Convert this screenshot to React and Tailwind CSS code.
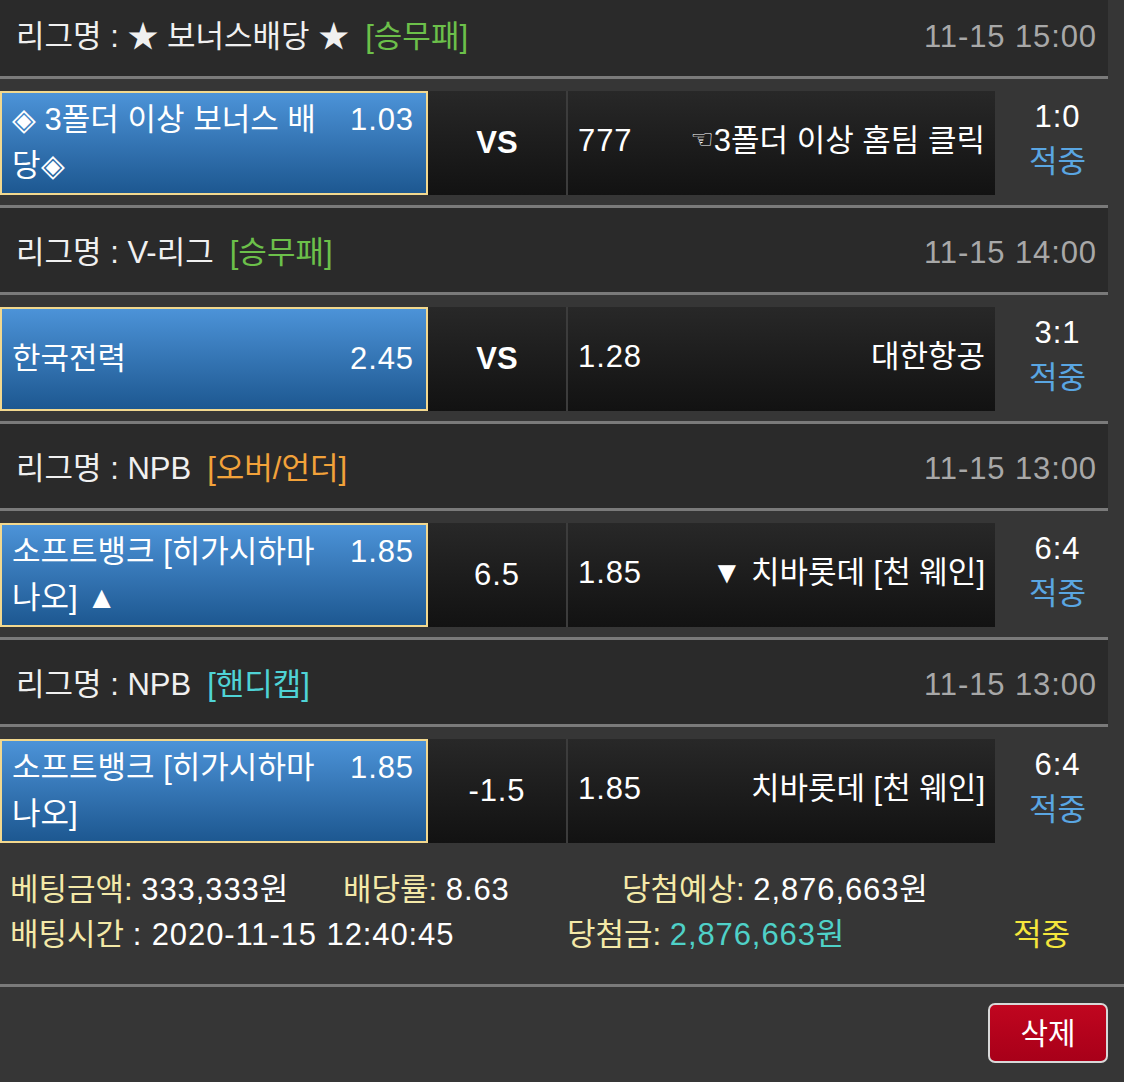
const games = [
  {
    league: "★ 보너스배당 ★",
    type: "[승무패]",
    typeColor: "text-[#6cc04a]",
    time: "11-15 15:00",
    home: "◈ 3폴더 이상 보너스 배당◈",
    homeOdds: "1.03",
    mid: "VS",
    bold: true,
    awayOdds: "777",
    away: "3폴더 이상 홈팀 클릭",
    hand: true,
    score: "1:0",
  },
  {
    league: "V-리그",
    type: "[승무패]",
    typeColor: "text-[#6cc04a]",
    time: "11-15 14:00",
    home: "한국전력",
    homeOdds: "2.45",
    mid: "VS",
    bold: true,
    awayOdds: "1.28",
    away: "대한항공",
    score: "3:1",
  },
  {
    league: "NPB",
    type: "[오버/언더]",
    typeColor: "text-[#f2a23a]",
    time: "11-15 13:00",
    home: "소프트뱅크 [히가시하마 나오] ▲",
    homeOdds: "1.85",
    mid: "6.5",
    awayOdds: "1.85",
    away: "▼ 치바롯데 [천 웨인]",
    score: "6:4",
  },
  {
    league: "NPB",
    type: "[핸디캡]",
    typeColor: "text-[#4fd3d6]",
    time: "11-15 13:00",
    home: "소프트뱅크 [히가시하마 나오]",
    homeOdds: "1.85",
    mid: "-1.5",
    awayOdds: "1.85",
    away: "치바롯데 [천 웨인]",
    score: "6:4",
  },
];

// digits in the shot run a bit wider than Liberation Sans
const N = ({ children, className = "" }) => (
  <span className={`tracking-[0.9px] ${className}`}>{children}</span>
);

function Game({ g }) {
  return (
    <div>
      <div className="h-[84px] bg-[#2a2a2a] flex items-center justify-between pl-[16px] pr-[11px] pt-[6px]">
        <div className="flex items-center">
          <span className="text-[#f0f0f0]">리그명 : {g.league}</span>
          <span className={`ml-[16px] ${g.typeColor}`}>{g.type}</span>
        </div>
        <N className="text-[#a8a8a8]">{g.time}</N>
      </div>
      <div className="h-[3px] bg-[#7a7a7a]"></div>
      <div className="h-[126px] pt-[12px] flex">
        <div className="w-[428px] h-[104px] border-2 border-[#f2d88e] bg-gradient-to-b from-[#4c93d8] to-[#1d5891] flex items-center pl-[10px] pr-[12px]">
          <div className="flex items-start justify-between w-full">
            <div className="w-[318px] text-white leading-[46px]">{g.home}</div>
            <N className="text-white leading-[46px]">{g.homeOdds}</N>
          </div>
        </div>
        <div className="w-[138px] h-[104px] bg-gradient-to-b from-[#282828] to-[#121212] flex items-center justify-center text-white">
          <span className={g.bold ? "font-bold" : "tracking-[0.9px]"}>{g.mid}</span>
        </div>
        <div className="w-[2px] h-[104px] bg-[#3c3c3c]"></div>
        <div className="w-[427px] h-[104px] bg-gradient-to-b from-[#282828] to-[#121212] flex items-center justify-between pl-[10px] pr-[10px] pb-[4px] text-white">
          <N>{g.awayOdds}</N>
          <span>
            {g.hand && (
              <span className="text-[26px] font-['DejaVu_Sans'] align-[3px]">☜</span>
            )}
            {g.away}
          </span>
        </div>
        <div className="flex-1 h-[104px] flex flex-col items-center justify-center leading-[45px] pl-[12px] pb-[8px]">
          <N className="text-white">{g.score}</N>
          <span className="text-[#5aa6e2]">적중</span>
        </div>
      </div>
    </div>
  );
}

export default function App() {
  return (
    <div className="w-[1124px] h-[1082px] overflow-hidden bg-[#363636] font-['Liberation_Sans','Noto_Sans_CJK_KR',sans-serif] text-[31px]">
      <div className="-mt-[8px] w-[1108px]">
        {games.map((g, i) => (
          <div key={i}>
            {i > 0 && <div className="h-[3px] bg-[#7a7a7a]"></div>}
            <Game g={g} />
          </div>
        ))}
      </div>
      <div className="h-[131px] pt-[14px] pl-[10px] leading-[45px]">
        <div className="flex">
          <div className="w-[333px]">
            <span className="text-[#f4e9a8]">베팅금액: </span>
            <N className="text-white">333,333</N>
            <span className="text-white">원</span>
          </div>
          <div className="w-[279px]">
            <span className="text-[#f4e9a8]">배당률: </span>
            <N className="text-white">8.63</N>
          </div>
          <div>
            <span className="text-[#f4e9a8]">당첨예상: </span>
            <N className="text-white">2,876,663</N>
            <span className="text-white">원</span>
          </div>
        </div>
        <div className="flex">
          <div className="w-[557px]">
            <span className="text-[#f4e9a8]">배팅시간 </span>
            <N className="text-white">: 2020-11-15 12:40:45</N>
          </div>
          <div className="w-[446px]">
            <span className="text-[#f4e9a8]">당첨금: </span>
            <N className="text-[#4fd1c8]">2,876,663</N>
            <span className="text-[#4fd1c8]">원</span>
          </div>
          <div className="text-[#f5e63c]">적중</div>
        </div>
      </div>
      <div className="h-[3px] bg-[#7a7a7a]"></div>
      <div className="flex justify-end pr-[16px] pt-[16px]">
        <button className="w-[120px] h-[60px] rounded-[7px] border-2 border-[#d8d8d8] bg-gradient-to-b from-[#c0061f] to-[#a80019] text-white text-[30px]">
          삭제
        </button>
      </div>
    </div>
  );
}
